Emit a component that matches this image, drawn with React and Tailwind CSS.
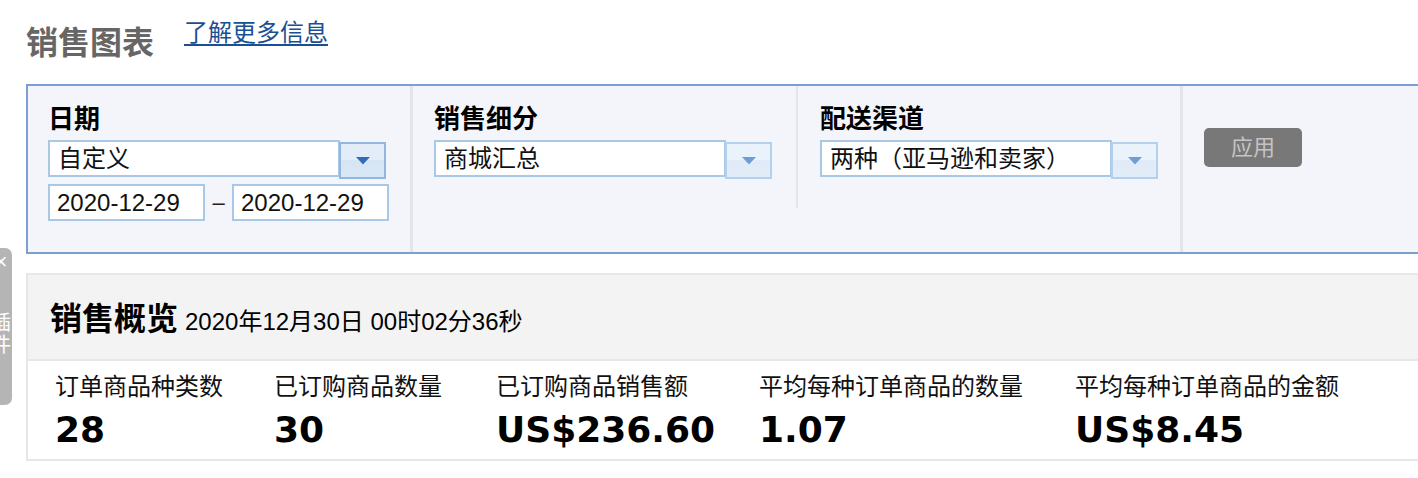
import React from "react";

function Arrow({ dark }) {
  return (
    <div
      className={
        dark
          ? "-ml-px mt-[2px] flex h-[37px] w-[47px] flex-none items-center justify-center border-2 border-[#8fb7e0] bg-[linear-gradient(#e3edf9_0%,#e3edf9_50%,#d6e5f4_50%,#d9e7f5_100%)]"
          : "-ml-px mt-[2px] flex h-[37px] w-[47px] flex-none items-center justify-center border-2 border-[#b3d0ec] bg-[linear-gradient(#eaf2fb_0%,#eaf2fb_50%,#e0ebf7_50%,#e2edf8_100%)]"
      }
    >
      <svg width="14" height="8" viewBox="0 0 14 8">
        <path d="M0 0 L14 0 L7 7.5 Z" fill={dark ? "#2f6db8" : "#6b9fd5"} />
      </svg>
    </div>
  );
}

function Select({ text, dark }) {
  return (
    <div className="flex items-start">
      <div className="flex h-[37px] w-[292px] flex-none items-center border-2 border-[#a9c8e5] bg-white pl-[8px] text-[24px] leading-[28px] text-[#111]">
        {text}
      </div>
      <Arrow dark={dark} />
    </div>
  );
}

function Metric({ label, value, w }) {
  return (
    <div className={w}>
      <div className="text-[24px] leading-[28px] text-[#111]">{label}</div>
      <div className="mt-[11px] [font-family:DejaVu_Sans,Verdana,sans-serif] text-[36px] font-bold leading-[36px] text-black">
        {value}
      </div>
    </div>
  );
}

export default function App() {
  return (
    <div className="relative h-[478px] w-[1418px] overflow-hidden bg-white [font-family:Liberation_Sans,Noto_Sans_CJK_SC,sans-serif] text-black">
      {/* side tab */}
      <div className="absolute left-0 top-[248px] h-[157px] w-[12px] overflow-hidden rounded-r-[7px] bg-[#b5b5b5]">
        <div className="-ml-[10px] flex w-[22px] flex-col items-center text-white">
          <div className="mt-[2px] text-[22px] leading-[24px]">×</div>
          <div className="mt-[38px] text-[20px] leading-[22px]">插</div>
          <div className="text-[20px] leading-[22px]">件</div>
        </div>
      </div>

      <div className="pl-[26px]">
        {/* title row */}
        <div className="flex h-[84px] items-start">
          <h1 className="mt-[25px] text-[32px] font-bold leading-[36px] text-[#666]">销售图表</h1>
          <a href="#" className="ml-[30px] mt-[19px] text-[24px] leading-[28px] text-[#1b4f93] underline underline-offset-[3px]">
            了解更多信息
          </a>
        </div>

        {/* filter panel */}
        <div className="flex h-[170px] border-2 border-r-0 border-[#7b9fd0] bg-[#f4f5fa]">
          <div className="w-[385px] flex-none border-r-[3px] border-[#e4e5ea] pl-[20px] pt-[18px]">
            <div className="text-[26px] font-bold leading-[30px]">日期</div>
            <div className="mt-[6px]">
              <Select text="自定义" dark />
            </div>
            <div className="mt-[5px] flex items-center">
              <div className="flex h-[37px] w-[157px] items-center border-2 border-[#a9c8e5] bg-white pl-[7px] text-[24px] leading-[28px] text-[#111]">
                2020-12-29
              </div>
              <div className="flex w-[27px] justify-center text-[22px] leading-[28px] text-[#222]">–</div>
              <div className="flex h-[37px] w-[157px] items-center border-2 border-[#a9c8e5] bg-white pl-[7px] text-[24px] leading-[28px] text-[#111]">
                2020-12-29
              </div>
            </div>
          </div>
          <div className="w-[383px] flex-none pl-[21px] pt-[18px]">
            <div className="text-[26px] font-bold leading-[30px]">销售细分</div>
            <div className="mt-[6px]">
              <Select text="商城汇总" />
            </div>
          </div>
          <div className="h-[122px] w-[2px] flex-none bg-[#e4e5ea]" />
          <div className="w-[385px] flex-none border-r-[3px] border-[#e4e5ea] pl-[22px] pt-[18px]">
            <div className="text-[26px] font-bold leading-[30px]">配送渠道</div>
            <div className="mt-[6px]">
              <Select text="两种（亚马逊和卖家）" />
            </div>
          </div>
          <div className="flex-1 pl-[21px] pt-[42px]">
            <button className="flex h-[39px] w-[98px] items-center justify-center rounded-[5px] bg-[#787878] text-[22px] leading-[26px] text-[#c4c4c4]">
              应用
            </button>
          </div>
        </div>

        {/* overview */}
        <div className="mt-[19px] h-[188px] border-2 border-r-0 border-[#e7e7e7]">
          <div className="flex h-[86px] items-center border-b-2 border-[#e7e7e7] bg-[#f3f3f3] pl-[22px]">
            <div className="mt-[3px] flex items-baseline">
              <span className="text-[32px] font-bold leading-[36px]">销售概览</span>
              <span className="ml-[7px] text-[24px] leading-[28px]">2020年12月30日 00时02分36秒</span>
            </div>
          </div>
          <div className="flex pl-[27px] pt-[12px]">
            <Metric w="w-[219px] flex-none" label="订单商品种类数" value="28" />
            <Metric w="w-[222px] flex-none" label="已订购商品数量" value="30" />
            <Metric w="w-[263px] flex-none" label="已订购商品销售额" value="US$236.60" />
            <Metric w="w-[316px] flex-none" label="平均每种订单商品的数量" value="1.07" />
            <Metric w="flex-1" label="平均每种订单商品的金额" value="US$8.45" />
          </div>
        </div>
      </div>
    </div>
  );
}
